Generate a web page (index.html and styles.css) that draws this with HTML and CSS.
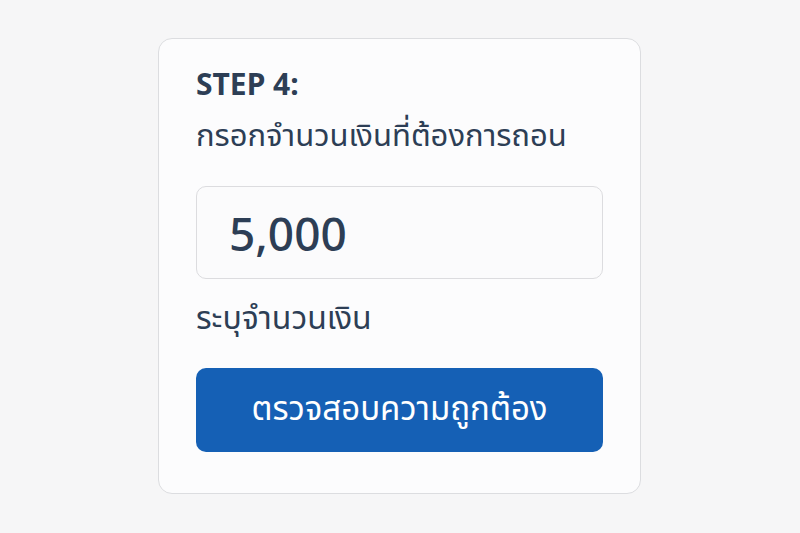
FILE: index.html
```html
<!DOCTYPE html>
<html lang="th">
<head>
<meta charset="utf-8">
<link rel="stylesheet" href="styles.css">
</head>
<body>
<div class="page">
  <div class="card">
    <div class="step">STEP 4:</div>
    <div class="title">กรอกจำนวนเงินที่ต้องการถอน</div>
    <div class="input">5,000</div>
    <div class="label">ระบุจำนวนเงิน</div>
    <button class="btn">ตรวจสอบความถูกต้อง</button>
  </div>
</div>
</body>
</html>
```
FILE: styles.css
```css
html, body {
  margin: 0;
  padding: 0;
  background: #f6f6f7;
}
.page {
  width: 800px;
  height: 533px;
  display: flex;
  justify-content: center;
  align-items: flex-start;
  font-family: "Noto Sans", "Noto Sans Thai", sans-serif;
  color: #2d3e55;
}
.card {
  margin-top: 38px;
  margin-left: -1px;
  width: 483px;
  height: 456px;
  box-sizing: border-box;
  border: 1.5px solid #dcdde0;
  border-radius: 14px;
  background: #fcfcfd;
  padding: 25px 37px 0 37px;
  display: flex;
  flex-direction: column;
}
.step {
  font-size: 30px;
  font-weight: 700;
  line-height: 40px;
}
.title {
  font-size: 31px;
  line-height: 40px;
  margin-top: 10px;
}
.input {
  margin-top: 32px;
  height: 93px;
  box-sizing: border-box;
  border: 1.5px solid #dcdcdf;
  border-radius: 10px;
  background: #fbfbfc;
  padding-left: 32px;
  display: flex;
  align-items: center;
  font-size: 46px;
  font-weight: 500;
}
.label {
  margin-top: 18px;
  font-size: 32px;
  line-height: 40px;
}
.btn {
  margin-top: 31px;
  height: 84px;
  border: none;
  border-radius: 10px;
  background: #1560b5;
  color: #ffffff;
  font-family: inherit;
  font-size: 33px;
}
```
